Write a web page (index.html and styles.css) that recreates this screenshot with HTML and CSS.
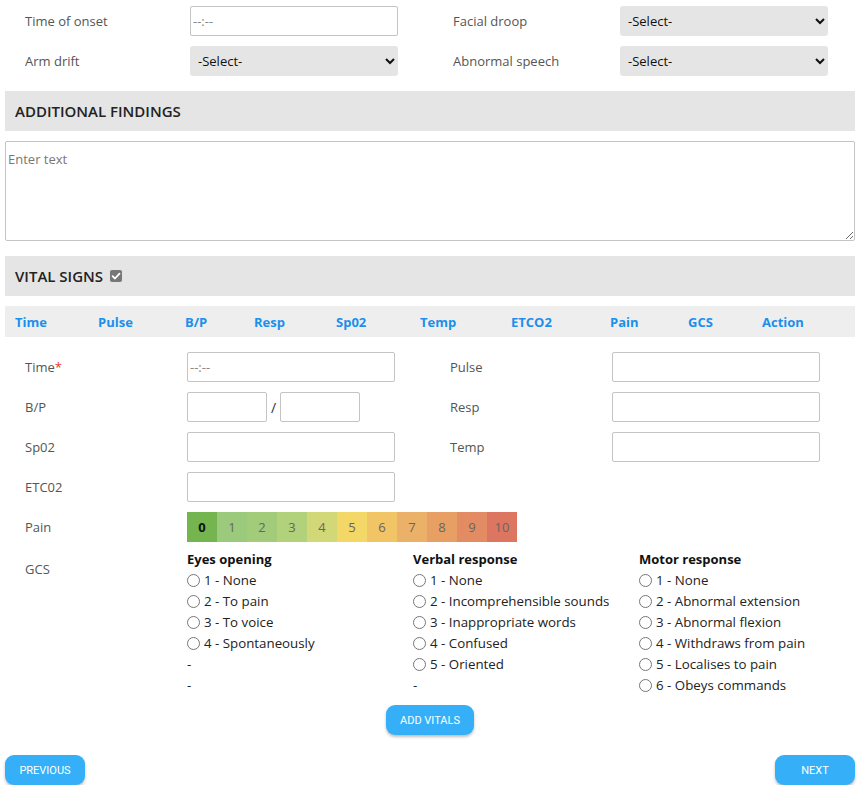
FILE: index.html
```html
<!DOCTYPE html>
<html>
<head>
<meta charset="utf-8">
<link rel="stylesheet" href="styles.css">
</head>
<body>
<div class="page">
  <div class="fast-grid">
    <label class="lbl">Time of onset</label>
    <input class="field" type="text" placeholder="--:--">
    <span></span>
    <label class="lbl">Facial droop</label>
    <select class="sel"><option>-Select-</option></select>
    <label class="lbl">Arm drift</label>
    <select class="sel"><option>-Select-</option></select>
    <span></span>
    <label class="lbl">Abnormal speech</label>
    <select class="sel"><option>-Select-</option></select>
  </div>

  <div class="section-head head-findings">ADDITIONAL FINDINGS</div>
  <textarea class="notes" placeholder="Enter text"></textarea>

  <div class="section-head head-vitals">VITAL SIGNS
    <span class="chk"><svg width="12" height="12" viewBox="0 0 12 12"><path d="M2.6 6.2 L5 8.5 L9.5 3.6" fill="none" stroke="#fff" stroke-width="1.8" stroke-linecap="round" stroke-linejoin="round"/></svg></span>
  </div>

  <div class="tabs">
    <span>Time</span><span>Pulse</span><span>B/P</span><span>Resp</span><span>Sp02</span><span>Temp</span><span>ETCO2</span><span>Pain</span><span>GCS</span><span>Action</span>
  </div>

  <div class="vgrid">
    <label class="lbl">Time<span class="req">*</span></label>
    <input class="field" type="text" placeholder="--:--">
    <span></span>
    <label class="lbl">Pulse</label>
    <input class="field" type="text">

    <label class="lbl">B/P</label>
    <div class="bp"><input class="field small" type="text"><span class="slash">/</span><input class="field small" type="text"></div>
    <span></span>
    <label class="lbl">Resp</label>
    <input class="field" type="text">

    <label class="lbl">Sp02</label>
    <input class="field" type="text">
    <span></span>
    <label class="lbl">Temp</label>
    <input class="field" type="text">

    <label class="lbl">ETC02</label>
    <input class="field" type="text">
    <span class="fill3"></span>

    <label class="lbl">Pain</label>
    <div class="pain wide">
      <span class="p0">0</span><span class="p1">1</span><span class="p2">2</span><span class="p3">3</span><span class="p4">4</span><span class="p5">5</span><span class="p6">6</span><span class="p7">7</span><span class="p8">8</span><span class="p9">9</span><span class="p10">10</span>
    </div>
  </div>

  <div class="gcs-row">
    <label class="lbl gcs-lbl">GCS</label>
    <div class="gcs">
      <div class="gcs-col">
        <div class="gcs-title">Eyes opening</div>
        <label class="opt"><input type="radio" name="e">1 - None</label>
        <label class="opt"><input type="radio" name="e">2 - To pain</label>
        <label class="opt"><input type="radio" name="e">3 - To voice</label>
        <label class="opt"><input type="radio" name="e">4 - Spontaneously</label>
        <div class="opt">-</div>
        <div class="opt">-</div>
      </div>
      <div class="gcs-col">
        <div class="gcs-title">Verbal response</div>
        <label class="opt"><input type="radio" name="v">1 - None</label>
        <label class="opt"><input type="radio" name="v">2 - Incomprehensible sounds</label>
        <label class="opt"><input type="radio" name="v">3 - Inappropriate words</label>
        <label class="opt"><input type="radio" name="v">4 - Confused</label>
        <label class="opt"><input type="radio" name="v">5 - Oriented</label>
        <div class="opt">-</div>
      </div>
      <div class="gcs-col last">
        <div class="gcs-title">Motor response</div>
        <label class="opt"><input type="radio" name="m">1 - None</label>
        <label class="opt"><input type="radio" name="m">2 - Abnormal extension</label>
        <label class="opt"><input type="radio" name="m">3 - Abnormal flexion</label>
        <label class="opt"><input type="radio" name="m">4 - Withdraws from pain</label>
        <label class="opt"><input type="radio" name="m">5 - Localises to pain</label>
        <label class="opt"><input type="radio" name="m">6 - Obeys commands</label>
      </div>
    </div>
  </div>

  <div class="add-row"><button class="btn btn-add">ADD VITALS</button></div>

  <div class="nav-row">
    <button class="btn btn-nav">PREVIOUS</button>
    <button class="btn btn-nav">NEXT</button>
  </div>
</div>
</body>
</html>
```

FILE: styles.css
```css
* { box-sizing: border-box; }
html, body { margin: 0; padding: 0; background: #fff; }
body {
  font-family: "Open Sans", "Noto Sans", sans-serif;
  font-size: 13px;
  color: #222;
}
.page {
  width: 850px;
  margin-left: 5px;
  padding-top: 6px;
}
.lbl {
  color: #555;
  font-size: 13px;
}
.fast-grid {
  display: grid;
  grid-template-columns: 165px 208px 55px 167px 208px;
  grid-auto-rows: 30px;
  row-gap: 10px;
  padding-left: 20px;
  align-items: center;
}
.field {
  height: 30px;
  width: 208px;
  border: 1px solid #c4c4c4;
  border-radius: 2px;
  padding: 0 5px 0 2px;
  font-family: inherit;
  font-size: 13px;
  color: #333;
  background: #fff;
  outline: none;
}
.field::placeholder { color: #888; }
.sel {
  height: 30px;
  width: 208px;
  border: none;
  border-radius: 3px;
  background-color: #e5e5e5;
  font-family: inherit;
  font-size: 13px;
  color: #111;
  padding: 0 4px;
}
.section-head {
  height: 40px;
  background: #e5e5e5;
  display: flex;
  align-items: center;
  padding-left: 10px;
  font-size: 15px;
  font-weight: 600;
  color: #222;
}
.head-findings { margin-top: 15px; }
.notes {
  display: block;
  margin-top: 10px;
  width: 850px;
  height: 100px;
  border: 1px solid #c4c4c4;
  border-radius: 2px;
  padding: 8px 2px;
  font-family: inherit;
  font-size: 13px;
  resize: vertical;
  outline: none;
}
.notes::placeholder { color: #777; }
.head-vitals { margin-top: 15px; gap: 5px; }
.chk {
  display: inline-flex;
  width: 12px;
  height: 12px;
  background: #777;
  border-radius: 2px;
  margin-top: -1px;
  margin-left: 2px;
}
.tabs {
  margin-top: 10px;
  height: 31px;
  background: #eeeeee;
  display: grid;
  grid-template-columns: 83px 87px 69px 82px 84px 91px 99px 78px 74px 93px;
  align-items: center;
  padding-left: 10px;
  font-size: 13px;
  font-weight: 700;
  color: #1a90ec;
}
.vgrid {
  margin-top: 15px;
  display: grid;
  grid-template-columns: 162px 208px 55px 162px 208px;
  grid-auto-rows: 30px;
  row-gap: 10px;
  padding-left: 20px;
  align-items: center;
}
.req { color: #e53935; }
.bp { display: flex; align-items: center; }
.field.small { width: 80px; }
.slash { width: 13px; text-align: center; color: #333; font-size: 14px; }
.fill3 { grid-column: span 3; }
.wide { grid-column: span 4; }
.pain {
  display: flex;
  height: 30px;
}
.pain span {
  width: 30px;
  height: 30px;
  display: flex;
  align-items: center;
  justify-content: center;
  color: #666;
  font-size: 13px;
}
.pain .p0 { background: #74b550; color: #111; font-weight: 700; }
.pain .p1 { background: #9bca7c; }
.pain .p2 { background: #a2cc7a; }
.pain .p3 { background: #b1d27a; }
.pain .p4 { background: #d2d877; }
.pain .p5 { background: #f3d767; }
.pain .p6 { background: #f1c466; }
.pain .p7 { background: #ecb168; }
.pain .p8 { background: #e89f64; }
.pain .p9 { background: #e38b62; }
.pain .p10 { background: #dd7661; }
.gcs-row {
  display: flex;
  padding-left: 20px;
  margin-top: 7px;
}
.gcs-lbl {
  width: 162px;
  flex-shrink: 0;
  padding-top: 11px;
}
.gcs { display: flex; }
.gcs-col {
  width: 226px;
  flex-shrink: 0;
  display: flex;
  flex-direction: column;
}
.gcs-col.last { width: 200px; }
.gcs-title {
  font-weight: 700;
  color: #111;
  font-size: 13px;
  line-height: 21px;
}
.opt {
  display: flex;
  align-items: center;
  line-height: 21px;
  height: 21px;
  color: #222;
  font-size: 13.3px;
}
.opt input {
  margin: 0 4px 0 0;
  width: 13px;
  height: 13px;
}
.add-row {
  display: flex;
  justify-content: center;
  margin-top: 9px;
}
.btn {
  border: none;
  background: #35b0f8;
  color: #fff;
  font-family: Roboto, "Open Sans", sans-serif;
  font-size: 11px;
  border-radius: 9px;
  height: 30px;
  box-shadow: 0 2px 3px rgba(0,0,0,0.25);
}
.btn-add { width: 88px; }
.nav-row {
  display: flex;
  justify-content: space-between;
  margin-top: 20px;
}
.btn-nav { width: 80px; }
```
